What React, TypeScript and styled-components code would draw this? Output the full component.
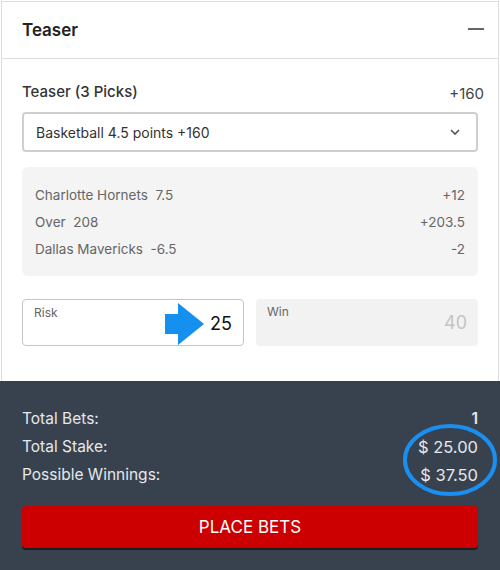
import styled, { createGlobalStyle } from 'styled-components'

const GlobalStyle = createGlobalStyle`
    html, body {
        margin: 0;
        padding: 0;
        background: #ffffff;
        font-family: Inter, "Noto Sans", sans-serif;
    }
`

// legs of the teaser
const picks = [
    { name: 'Charlotte Hornets', line: '7.5', odds: '+12' },
    { name: 'Over', line: '208', odds: '+203.5' },
    { name: 'Dallas Mavericks', line: '-6.5', odds: '-2' },
]

const totals = [
    { label: 'Total Bets:', value: '1' },
    { label: 'Total Stake:', value: '$ 25.00' },
    { label: 'Possible Winnings:', value: '$ 37.50' },
]

const App = () => {
    return (
        <Page>
            <GlobalStyle />
            <Card>
                <Header>
                    <Title>Teaser</Title>
                    <Minus />
                </Header>
                <Body>
                    <TopRow>
                        <Subtitle>Teaser (3 Picks)</Subtitle>
                        <Odds>+160</Odds>
                    </TopRow>
                    <Select>
                        <span>Basketball 4.5 points +160</span>
                        <svg width="14" height="14" viewBox="0 0 14 14">
                            <path d="M3 5 L7 9 L11 5" fill="none" stroke="#555" strokeWidth="1.6" />
                        </svg>
                    </Select>
                    <PickBox>
                        {picks.map(p => (
                            <PickRow key={p.name}>
                                <span>{p.name}&nbsp;&nbsp;{p.line}</span>
                                <span>{p.odds}</span>
                            </PickRow>
                        ))}
                    </PickBox>
                    <Inputs>
                        <Field>
                            <FieldLabel>Risk</FieldLabel>
                            <FieldValue>25</FieldValue>
                            <Arrow width="40" height="42" viewBox="0 0 40 42">
                                <path d="M0 11 H13 V0 L39 21 L13 42 V31 H0 Z" fill="#1590ee" />
                            </Arrow>
                        </Field>
                        <Field $disabled>
                            <FieldLabel>Win</FieldLabel>
                            <FieldValue $muted>40</FieldValue>
                        </Field>
                    </Inputs>
                </Body>
            </Card>
            <Footer>
                <Totals>
                    {totals.map(t => (
                        <TotalRow key={t.label}>
                            <span>{t.label}</span>
                            <TotalValue $strong={t.value === '1'}>{t.value}</TotalValue>
                        </TotalRow>
                    ))}
                    <Circle width="96" height="74" viewBox="0 0 96 74">
                        <ellipse cx="48" cy="37" rx="45" ry="34" fill="none" stroke="#1a8ff0" strokeWidth="4" />
                    </Circle>
                </Totals>
                <PlaceButton>PLACE BETS</PlaceButton>
            </Footer>
        </Page>
    )
}

export default App

const Page = styled.div`
    width: 500px;
    height: 570px;
    display: flex;
    flex-direction: column;
    overflow: hidden;
`

const Card = styled.div`
    margin: 1px 1px 0 1px;
    border: 1px solid #dedede;
    border-bottom: none;
    background: #fff;
    height: 380px;
    box-sizing: border-box;
`

const Header = styled.div`
    height: 56px;
    display: flex;
    align-items: center;
    justify-content: space-between;
    padding: 0 14px 0 20px;
    border-bottom: 1px solid #dcdcdc;
`

const Title = styled.div`
    font-size: 17px;
    font-weight: 600;
    color: #222;
`

const Minus = styled.div`
    width: 16px;
    height: 2px;
    background: #666;
    margin-bottom: 2px;
`

const Body = styled.div`
    padding: 23px 20px 0 20px;
`

const TopRow = styled.div`
    display: flex;
    justify-content: space-between;
    align-items: flex-start;
    height: 24px;
`

const Subtitle = styled.div`
    font-size: 15px;
    font-weight: 500;
    color: #333;
`

const Odds = styled.div`
    font-size: 15px;
    color: #444;
    margin: 2px -6px 0 0;
`

const Select = styled.div`
    margin-top: 6px;
    height: 40px;
    box-sizing: border-box;
    border: 2px solid #cfcfcf;
    border-radius: 4px;
    display: flex;
    align-items: center;
    justify-content: space-between;
    padding: 0 14px 0 12px;
    font-size: 14px;
    color: #333;
`

const PickBox = styled.div`
    margin-top: 15px;
    height: 109px;
    box-sizing: border-box;
    background: #f4f4f4;
    border-radius: 6px;
    padding: 20px 13px 0 13px;
    display: flex;
    flex-direction: column;
`

const PickRow = styled.div`
    display: flex;
    justify-content: space-between;
    height: 27px;
    font-size: 13.5px;
    color: #666;
`

const Inputs = styled.div`
    margin-top: 23px;
    display: grid;
    grid-template-columns: 1fr 1fr;
    gap: 12px;
`

const Field = styled.div<{ $disabled?: boolean }>`
    position: relative;
    height: 47px;
    box-sizing: border-box;
    border: ${p => p.$disabled ? 'none' : '1px solid #c4c4c4'};
    background: ${p => p.$disabled ? '#f2f2f2' : '#fff'};
    border-radius: 4px;
    padding: 6px 11px 0 11px;
    display: flex;
    flex-direction: column;
`

const FieldLabel = styled.div`
    font-size: 12px;
    line-height: 14px;
    color: #666;
`

const FieldValue = styled.div<{ $muted?: boolean }>`
    margin-top: -6px;
    text-align: right;
    font-size: 18px;
    line-height: 20px;
    color: ${p => p.$muted ? '#c4c4c4' : '#111'};
`

const Arrow = styled.svg`
    position: absolute;
    left: 142px;
    top: 3px;
`

const Footer = styled.div`
    flex: 1;
    background: #38424f;
    padding: 28px 22px 0 22px;
`

const Totals = styled.div`
    position: relative;
    display: flex;
    flex-direction: column;
`

const TotalRow = styled.div`
    display: flex;
    justify-content: space-between;
    height: 28px;
    font-size: 15.5px;
    color: #e6e8ea;
`

const TotalValue = styled.span<{ $strong?: boolean }>`
    font-weight: ${p => p.$strong ? 600 : 400};
    font-size: ${p => p.$strong ? '15.5px' : '16.5px'};
`

const Circle = styled.svg`
    position: absolute;
    right: -20px;
    top: 14px;
`

const PlaceButton = styled.button`
    margin-top: 13px;
    width: 100%;
    height: 42px;
    border: none;
    border-radius: 4px;
    background: #cc0000;
    color: #fff;
    font-family: inherit;
    font-size: 17px;
    box-shadow: 0 2px 0 #1d1d1d;
`
